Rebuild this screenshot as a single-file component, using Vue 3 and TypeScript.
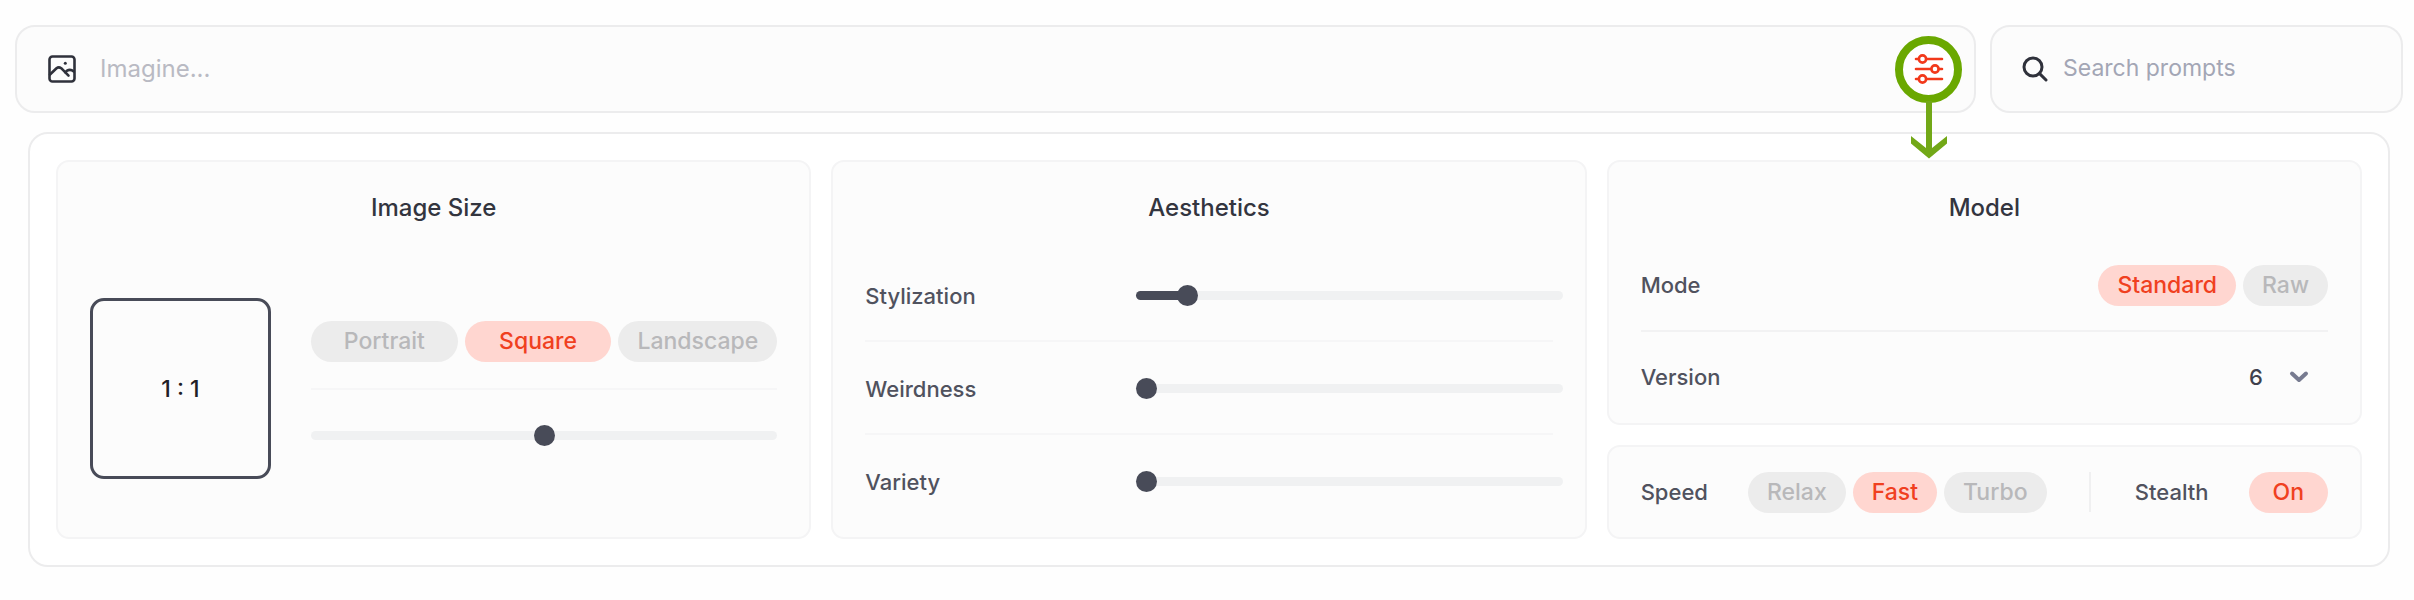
<script setup lang="ts">
import { reactive, ref } from 'vue'

interface Slider {
  id: string
  label: string
  value: number
}

const prompt = ref('')
const search = ref('')

const shapes = ['Portrait', 'Square', 'Landscape']
const shape = ref('Square')
const ratio = ref(50)

const sliders = reactive<Slider[]>([
  { id: 'stylization', label: 'Stylization', value: 10 },
  { id: 'weirdness', label: 'Weirdness', value: 0 },
  { id: 'variety', label: 'Variety', value: 0 },
])

const modes = ['Standard', 'Raw']
const mode = ref('Standard')
const versions = ['6', '5.2', '5.1', '5', '4']
const version = ref('6')
const speeds = ['Relax', 'Fast', 'Turbo']
const speed = ref('Fast')
const stealth = ref(true)
</script>

<template>
  <main class="page">
    <div class="bars">
      <div class="bar prompt-bar">
        <button class="icon-button" type="button" aria-label="Add image">
          <svg width="28" height="28" viewBox="0 0 28 28" fill="none" stroke="#2f313b" stroke-width="2.6" stroke-linecap="round" stroke-linejoin="round">
            <rect x="1.5" y="1.5" width="25" height="25" rx="3" />
            <path d="M2 19.5 L8.5 13.2 Q10.8 11.4 13.2 13.2 L20.5 20.6" />
            <path d="M17.2 17.2 L19 15.7 Q22.3 13.6 25.8 16.4" />
            <circle cx="17.3" cy="8.3" r="1.5" fill="#2f313b" stroke="none" />
          </svg>
        </button>
        <input v-model="prompt" class="field prompt-field" type="text" placeholder="Imagine..." aria-label="Prompt" />
        <button class="settings" type="button" aria-label="Settings">
          <svg width="30" height="30" viewBox="0 0 30 30" fill="none" stroke="#f2391b" stroke-width="2.6" stroke-linecap="round">
            <path d="M2 5H4.5M12.5 5H28M2 15H17M25 15H28M2 25H4.5M12.5 25H28" />
            <circle cx="8.5" cy="5" r="3.6" />
            <circle cx="21" cy="15" r="3.6" />
            <circle cx="8.5" cy="25" r="3.6" />
          </svg>
          <svg class="pointer" width="38" height="58" viewBox="0 0 38 58" fill="#72a817" aria-hidden="true">
            <path d="M16 0H22V47L37 35V42.5L19 57.5L1 42.5V35L16 47Z" />
          </svg>
        </button>
      </div>
      <div class="bar search-bar">
        <svg width="26" height="26" viewBox="0 0 26 26" fill="none" stroke="#2f313b" stroke-width="3" stroke-linecap="round" aria-hidden="true">
          <circle cx="11" cy="11" r="9" />
          <path d="M17.6 17.6L24 24" />
        </svg>
        <input v-model="search" class="field search-field" type="search" placeholder="Search prompts" aria-label="Search prompts" />
      </div>
    </div>

    <div class="panel">
      <section class="card">
        <h2 class="title">Image Size</h2>
        <div class="size-body">
          <div class="preview">1 : 1</div>
          <div class="size-controls">
            <div class="size-row">
              <div class="pills shape-pills">
                <button
                  v-for="name in shapes"
                  :key="name"
                  type="button"
                  class="pill"
                  :class="{ active: shape === name }"
                  :aria-pressed="shape === name"
                  @click="shape = name"
                >{{ name }}</button>
              </div>
            </div>
            <hr class="rule" />
            <div class="size-row">
              <input v-model.number="ratio" class="range" type="range" min="0" max="100" aria-label="Aspect ratio" />
            </div>
          </div>
        </div>
      </section>

      <section class="card">
        <h2 class="title">Aesthetics</h2>
        <div class="slider-list">
          <div v-for="item in sliders" :key="item.id" class="slider-row">
            <label class="label" :for="item.id">{{ item.label }}</label>
            <input
              :id="item.id"
              v-model.number="item.value"
              class="range filled"
              type="range"
              min="0"
              max="100"
              :style="{ '--fill': item.value + '%' }"
            />
          </div>
        </div>
      </section>

      <div class="stack">
        <section class="card model">
          <h2 class="title">Model</h2>
          <div class="row">
            <span class="label">Mode</span>
            <div class="pills">
              <button
                v-for="name in modes"
                :key="name"
                type="button"
                class="pill"
                :class="{ active: mode === name }"
                :aria-pressed="mode === name"
                @click="mode = name"
              >{{ name }}</button>
            </div>
          </div>
          <hr class="rule strong" />
          <div class="row">
            <label class="label" for="version">Version</label>
            <div class="select-box">
              <select id="version" v-model="version" class="select">
                <option v-for="v in versions" :key="v" :value="v">{{ v }}</option>
              </select>
              <svg class="chevron" width="20" height="14" viewBox="0 0 20 14" fill="none" stroke="#777b90" stroke-width="4" stroke-linecap="round" stroke-linejoin="round" aria-hidden="true">
                <path d="M3 3.5L10 10L17 3.5" />
              </svg>
            </div>
          </div>
        </section>
        <section class="card speed">
          <span class="label">Speed</span>
          <div class="pills speed-pills">
            <button
              v-for="name in speeds"
              :key="name"
              type="button"
              class="pill"
              :class="{ active: speed === name }"
              :aria-pressed="speed === name"
              @click="speed = name"
            >{{ name }}</button>
          </div>
          <span class="separator"></span>
          <span class="label">Stealth</span>
          <button
            type="button"
            class="pill stealth"
            :class="{ active: stealth }"
            :aria-pressed="stealth"
            @click="stealth = !stealth"
          >{{ stealth ? 'On' : 'Off' }}</button>
        </section>
      </div>
    </div>
  </main>
</template>

<style>
body {
  background: #fefefe;
}
</style>

<style scoped>
* {
  box-sizing: border-box;
}

.page {
  padding: 25px 11px 32px 15px;
  font-family: Inter, "Liberation Sans", sans-serif;
  font-size: 22px;
  color: #33353f;
}

button,
input,
select {
  margin: 0;
  padding: 0;
  border: 0;
  background: none;
  font: inherit;
  outline: none;
}

button {
  cursor: pointer;
}

.bars {
  display: flex;
  gap: 14px;
}

.bar {
  display: flex;
  align-items: center;
  height: 88px;
  border: 2px solid #ececed;
  border-radius: 20px;
  background: #fcfcfc;
}

.prompt-bar {
  flex: 1;
  padding: 0 12px 0 31px;
}

.search-bar {
  width: 413px;
  gap: 15px;
  padding: 0 30px;
}

.icon-button {
  display: flex;
}

.field {
  flex: 1;
  min-width: 0;
  height: 40px;
  padding-bottom: 2px;
  appearance: none;
}

.prompt-field {
  margin-left: 24px;
  font-size: 24px;
}

.search-field {
  font-size: 23px;
}

.prompt-field::placeholder {
  color: #b9bac3;
  opacity: 1;
}

.search-field::placeholder {
  color: #a3a6b5;
  opacity: 1;
}

.settings {
  position: relative;
  display: flex;
  align-items: center;
  justify-content: center;
  width: 67px;
  height: 67px;
  border: 8px solid #6aa800;
  border-radius: 50%;
  background: #ffffff;
}

.pointer {
  position: absolute;
  top: 57px;
  left: 50%;
  margin-left: -19px;
  pointer-events: none;
}

.panel {
  display: grid;
  grid-template-columns: repeat(3, minmax(0, 1fr));
  gap: 20px;
  margin: 19px 13px 0;
  padding: 26px;
  border: 2px solid #ececed;
  border-radius: 20px;
  background: #ffffff;
}

.card {
  display: flex;
  flex-direction: column;
  padding: 30px 32px 9px;
  border: 2px solid #f4f4f5;
  border-radius: 13px;
  background: #fcfcfc;
}

.title {
  margin: 0;
  font-size: 24px;
  font-weight: 500;
  line-height: 32px;
  text-align: center;
}

.size-body {
  display: flex;
  flex: 1;
  align-items: center;
  gap: 40px;
  padding-top: 25px;
}

.preview {
  display: flex;
  flex: none;
  align-items: center;
  justify-content: center;
  width: 181px;
  height: 181px;
  border: 3px solid #484b58;
  border-radius: 14px;
  font-size: 23px;
  font-weight: 500;
  color: #1f2026;
}

.size-controls {
  flex: 1;
}

.size-row {
  display: flex;
  align-items: center;
  height: 92px;
}

.rule {
  height: 2px;
  margin: 0;
  border: 0;
  background: #f6f6f7;
}

.rule.strong {
  background: #f2f2f3;
}

.pills {
  display: flex;
  gap: 7px;
}

.shape-pills {
  display: grid;
  flex: 1;
  grid-template-columns: 12fr 12fr 13fr;
}

.pill {
  height: 41px;
  padding: 0 19px;
  border-radius: 21px;
  background: #ececec;
  color: #b8b8ba;
  font-size: 23px;
  font-weight: 500;
  line-height: 41px;
  white-space: nowrap;
}

.shape-pills .pill {
  padding: 0 8px;
}

.pill.active {
  background: #ffd6d0;
  color: #f0401f;
}

.label {
  font-weight: 500;
  color: #50525e;
}

.slider-list {
  margin-top: 25px;
}

.slider-row {
  display: grid;
  grid-template-columns: 271px 1fr;
  align-items: center;
  height: 93px;
  margin-right: -10px;
  background: linear-gradient(#f6f6f7, #f6f6f7) left bottom / calc(100% - 10px) 2px no-repeat;
}

.slider-row:last-child {
  background: none;
}

.range {
  width: 100%;
  height: 21px;
  appearance: none;
  --fill: 0%;
  cursor: pointer;
}

.range::-webkit-slider-runnable-track {
  height: 9px;
  border-radius: 5px;
  background: #f0f1f2;
}

.range.filled::-webkit-slider-runnable-track {
  background: linear-gradient(to right, #484b58 var(--fill), #f0f1f2 var(--fill));
}

.range::-webkit-slider-thumb {
  width: 21px;
  height: 21px;
  margin-top: -6px;
  border-radius: 50%;
  background: #484b58;
  appearance: none;
}

.stack {
  display: flex;
  flex-direction: column;
  gap: 20px;
}

.card.model {
  flex: 1;
  padding-bottom: 0;
}

.model .title {
  margin-bottom: 16px;
}

.row {
  display: flex;
  align-items: center;
  justify-content: space-between;
  height: 90px;
}

.select-box {
  display: grid;
  align-items: center;
}

.select {
  grid-area: 1 / 1;
  width: 96px;
  height: 41px;
  padding: 0 50px 0 17px;
  appearance: none;
  font-weight: 500;
  color: #3f414c;
  cursor: pointer;
}

.chevron {
  grid-area: 1 / 1;
  justify-self: end;
  margin-right: 19px;
  pointer-events: none;
}

.card.speed {
  flex-direction: row;
  align-items: center;
  height: 94px;
  padding: 0 32px;
}

.speed-pills {
  margin-left: 40px;
}

.separator {
  width: 2px;
  height: 40px;
  margin-right: 44px;
  margin-left: auto;
  background: #f0f0f1;
}

.stealth {
  margin-left: 40px;
  padding: 0 24px;
}
</style>
